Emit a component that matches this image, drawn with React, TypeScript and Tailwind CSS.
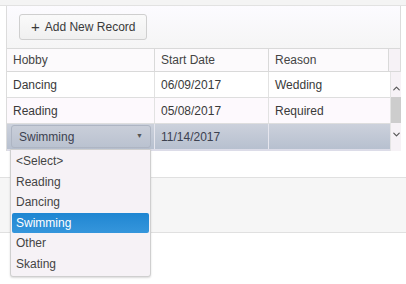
import { ChevronDown, ChevronUp } from "lucide-react";

const rows = [
  { hobby: "Dancing", date: "06/09/2017", reason: "Wedding", bg: "bg-white" },
  { hobby: "Reading", date: "05/08/2017", reason: "Required", bg: "bg-[#fdf9fd]" },
];

const options = ["<Select>", "Reading", "Dancing", "Swimming", "Other", "Skating"];

const App = () => {
  return (
    <div className="relative w-[406px] h-[284px] bg-white text-[12px] text-[#3a3a3a] font-['Liberation_Sans',Arial,sans-serif] overflow-hidden">
      <div className="h-[6px] bg-[#f4f4f4] border-b border-[#e2e2e2]" />

      {/* grid */}
      <div className="ml-[6px] w-[395px] border-l border-r border-[#dcdcdc]">
        <div className="h-[42px] px-[12px] pt-[8px] bg-gradient-to-b from-[#fcfbff] to-[#f5f5f5]">
          <button className="h-[26px] px-[11px] flex items-center gap-[5px] rounded-[3px] border border-[#cfcfcf] bg-gradient-to-b from-[#fafafa] to-[#f0f0f0] text-[#3a3a3a] text-[12px]">
            <span className="text-[15px] leading-none -mt-[1px]">+</span>
            <span>Add New Record</span>
          </button>
        </div>

        <div className="grid grid-cols-[148px_114px_120px_11px] h-[24px] border-t border-b border-[#d9d9d9] bg-[#fcfafc] text-[#444]">
          <div className="px-[6px] flex items-center border-r border-[#d9d9d9]">Hobby</div>
          <div className="px-[6px] flex items-center border-r border-[#d9d9d9]">Start Date</div>
          <div className="px-[6px] flex items-center border-r border-[#d9d9d9]">Reason</div>
          <div className="bg-[#f6f2f6]" />
        </div>

        <div className="grid grid-cols-[383px_11px]">
          <div>
            {rows.map((r) => (
              <div
                key={r.hobby}
                className={`grid grid-cols-[148px_114px_121px] h-[26px] border-b border-[#dedede] ${r.bg}`}
              >
                <div className="px-[6px] flex items-center border-r border-[#e2e2e2]">{r.hobby}</div>
                <div className="px-[6px] flex items-center border-r border-[#e2e2e2]">{r.date}</div>
                <div className="px-[6px] flex items-center">{r.reason}</div>
              </div>
            ))}
            <div className="grid grid-cols-[148px_114px_121px] h-[27px] bg-gradient-to-b from-[#ccd1dc] to-[#b7c0cf] border-b-[2px] border-[#dcdce8] text-[#3c4150]">
              <div className="pl-[4px] pr-[3px] py-[1px] border-r border-[#e6e6ee]">
                <div className="h-full flex items-center justify-between px-[7px] rounded-[3px] border border-[#aeb5c3] bg-gradient-to-b from-[#c9ced9] to-[#bac2d0]">
                  <span>Swimming</span>
                  <span className="text-[7px] text-[#555]">▼</span>
                </div>
              </div>
              <div className="px-[6px] flex items-center border-r border-[#e6e6ee]">11/14/2017</div>
              <div />
            </div>
          </div>
          <div className="bg-[#f6f2f6] flex flex-col items-center border-l border-[#e4e4e4]">
            <div className="h-[25px] flex items-end pb-[3px]">
              <ChevronUp size={11} strokeWidth={2.5} className="text-[#555]" />
            </div>
            <div className="w-[10px] h-[26px] bg-[#cdcdcd]" />
            <div className="h-[22px] flex items-center">
              <ChevronDown size={11} strokeWidth={2.5} className="text-[#555]" />
            </div>
          </div>
        </div>
      </div>

      <div className="mt-[26px] h-[56px] bg-[#f6f6f6] border-t border-b border-[#e0e0e0]" />

      {/* dropdown popup */}
      <div className="absolute left-[10px] top-[149px] w-[141px] h-[128px] bg-[#f6f2f6] border border-[#cfcfcf] rounded-b-[3px] shadow-[0_1px_2px_rgba(0,0,0,0.15)] pt-[1px] text-[#444]">
        {options.map((o) => (
          <div
            key={o}
            className={
              o === "Swimming"
                ? "h-[20.5px] mx-[1px] px-[4px] flex items-center rounded-[2px] bg-gradient-to-b from-[#1f86d2] to-[#3596dc] text-white"
                : "h-[20.5px] px-[5px] flex items-center"
            }
          >
            {o}
          </div>
        ))}
      </div>
    </div>
  );
};

export default App;
